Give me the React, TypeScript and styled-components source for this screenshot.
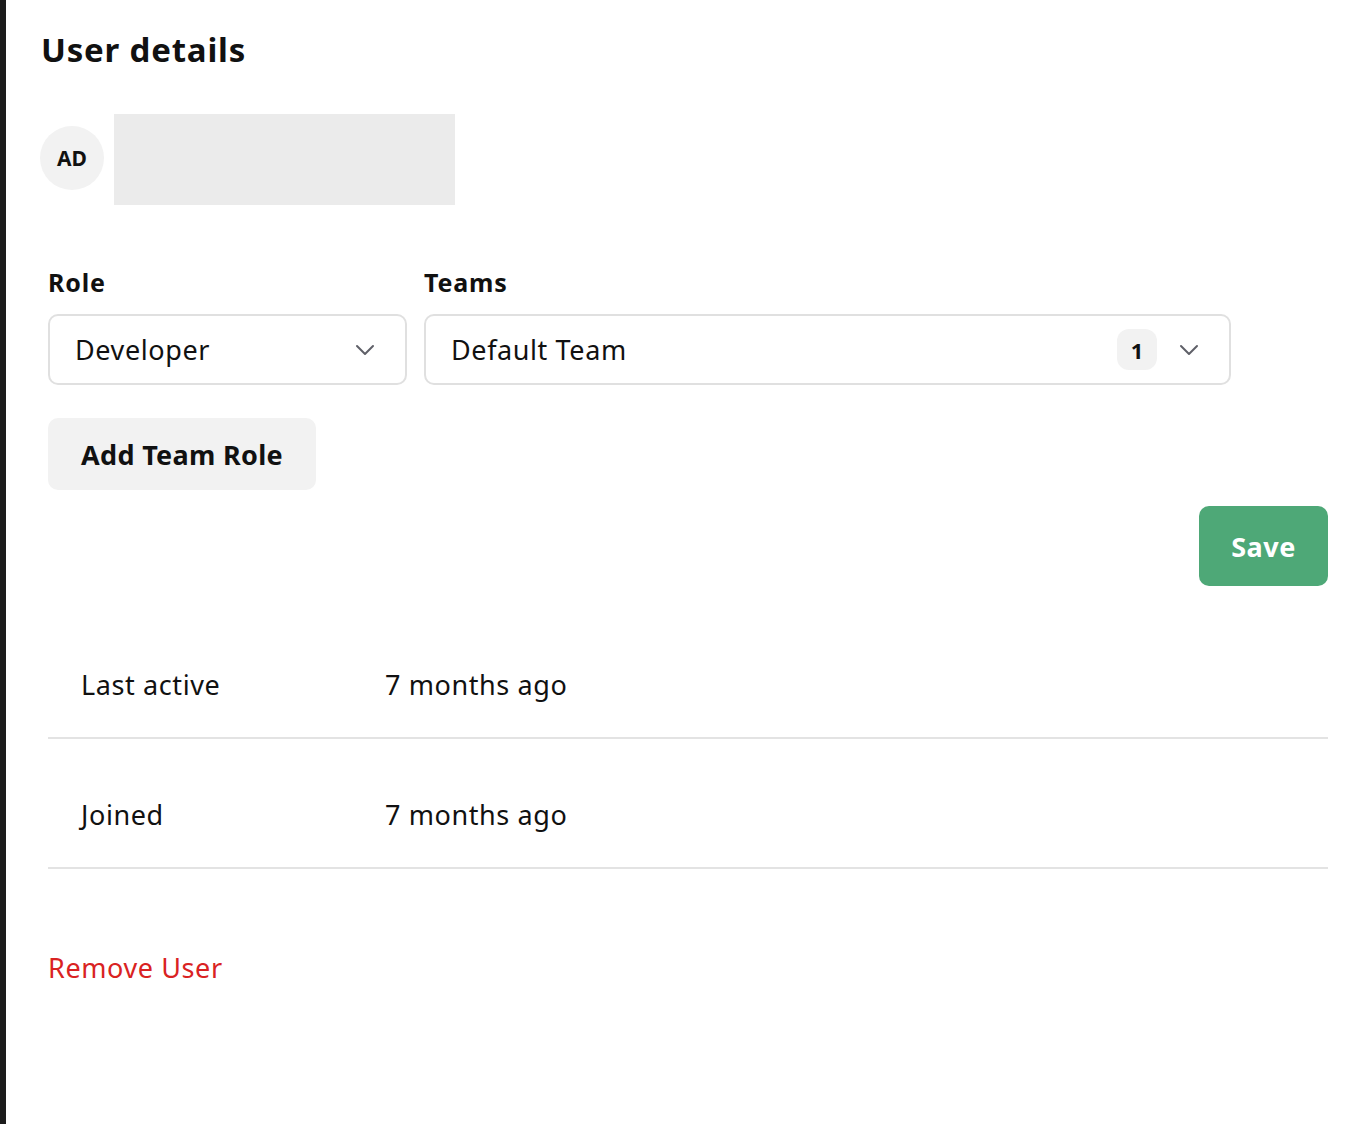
import React from 'react';
import styled, { createGlobalStyle } from 'styled-components';

const GlobalStyle = createGlobalStyle`
  html, body {
    margin: 0;
    padding: 0;
    background: #ffffff;
  }
  body {
    font-family: 'Noto Sans', Lato, sans-serif;
    color: #111111;
  }
`;

const Page = styled.div`
  display: flex;
  min-height: 1124px;
`;

const Edge = styled.div`
  width: 6px;
  flex-shrink: 0;
  background: #1c1c1c;
`;

const Panel = styled.main`
  flex: 1;
  padding: 26px 30px 40px 42px;
  display: flex;
  flex-direction: column;
`;

const Title = styled.h1`
  margin: 0 0 0 -7px;
  font-size: 33px;
  line-height: 48px;
  letter-spacing: 0.8px;
  font-weight: 700;
  color: #111111;
`;

const Identity = styled.div`
  display: flex;
  align-items: center;
  gap: 10px;
  margin: 40px 0 0 -8px;
`;

const Avatar = styled.div`
  width: 64px;
  height: 64px;
  border-radius: 50%;
  background: #f2f2f2;
  display: flex;
  align-items: center;
  justify-content: center;
  font-size: 21px;
  font-weight: 700;
  margin-top: -4px;
`;

const NamePlaceholder = styled.div`
  width: 341px;
  height: 91px;
  background: #ebebeb;
`;

const Fields = styled.div`
  display: flex;
  gap: 17px;
  margin-top: 62px;
`;

const Field = styled.div<{ $width: number }>`
  width: ${p => p.$width}px;
  display: flex;
  flex-direction: column;
`;

const Label = styled.label`
  font-size: 25px;
  font-weight: 700;
  line-height: 30px;
  letter-spacing: 0.8px;
  margin: 0 0 17px 0;
`;

const Select = styled.div`
  height: 71px;
  box-sizing: border-box;
  border: 2px solid #e0e0e0;
  border-radius: 10px;
  display: flex;
  align-items: center;
  padding: 0 30px 0 25px;
  gap: 22px;
`;

const SelectValue = styled.span`
  flex: 1;
  font-size: 27px;
  letter-spacing: 0.6px;
  color: #111111;
`;

const Count = styled.span`
  width: 40px;
  height: 41px;
  border-radius: 12px;
  background: #f2f2f2;
  display: flex;
  align-items: center;
  justify-content: center;
  font-size: 22px;
  font-weight: 700;
`;

const Chevron = () => (
  <svg width="20" height="12" viewBox="0 0 20 12" fill="none">
    <path d="M2 2l8 8 8-8" stroke="#5f6068" strokeWidth="2" strokeLinecap="round" strokeLinejoin="round" />
  </svg>
);

const GreyButton = styled.button`
  align-self: flex-start;
  margin-top: 33px;
  width: 268px;
  height: 72px;
  border: none;
  border-radius: 10px;
  background: #f2f2f2;
  font-family: inherit;
  font-size: 27px;
  letter-spacing: 0.3px;
  font-weight: 700;
  color: #111111;
`;

const SaveRow = styled.div`
  display: flex;
  justify-content: flex-end;
  margin-top: 16px;
`;

const SaveButton = styled.button`
  width: 129px;
  height: 80px;
  border: none;
  border-radius: 10px;
  background: #4ea877;
  color: #ffffff;
  font-family: inherit;
  font-size: 27px;
  letter-spacing: 0.5px;
  font-weight: 700;
`;

const InfoList = styled.div`
  margin-top: 23px;
  display: flex;
  flex-direction: column;
`;

const InfoRow = styled.div`
  display: grid;
  grid-template-columns: 304px 1fr;
  align-items: center;
  height: 130px;
  box-sizing: border-box;
  padding: 22px 0 0 33px;
  border-bottom: 2px solid #e3e3e3;
  font-size: 27px;
  letter-spacing: 0.6px;
  color: #111111;
`;

const RemoveLink = styled.button`
  align-self: flex-start;
  margin-top: 80px;
  padding: 0;
  border: none;
  background: none;
  font-family: inherit;
  font-size: 27px;
  letter-spacing: 0.6px;
  color: #d92222;
`;

const App: React.FC = () => {
  const info = [
    { label: 'Last active', value: '7 months ago' },
    { label: 'Joined', value: '7 months ago' },
  ];

  return (
    <>
      <GlobalStyle />
      <Page>
        <Edge />
        <Panel>
          <Title>User details</Title>
          <Identity>
            <Avatar>AD</Avatar>
            <NamePlaceholder />
          </Identity>

          <Fields>
            <Field $width={359}>
              <Label>Role</Label>
              <Select>
                <SelectValue>Developer</SelectValue>
                <Chevron />
              </Select>
            </Field>
            <Field $width={807}>
              <Label>Teams</Label>
              <Select>
                <SelectValue>Default Team</SelectValue>
                <Count>1</Count>
                <Chevron />
              </Select>
            </Field>
          </Fields>

          <GreyButton>Add Team Role</GreyButton>

          <SaveRow>
            <SaveButton>Save</SaveButton>
          </SaveRow>

          <InfoList>
            {info.map(row => (
              <InfoRow key={row.label}>
                <span>{row.label}</span>
                <span>{row.value}</span>
              </InfoRow>
            ))}
          </InfoList>

          <RemoveLink>Remove User</RemoveLink>
        </Panel>
      </Page>
    </>
  );
};

export default App;
